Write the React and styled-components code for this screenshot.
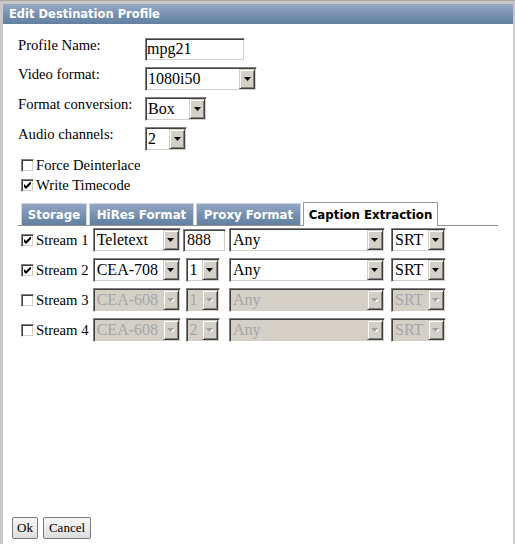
import React from "react";
import styled, { createGlobalStyle } from "styled-components";

const GlobalStyle = createGlobalStyle`
  html, body {
    margin: 0;
    padding: 0;
  }
  body {
    background: #c9c9c9;
    font-family: "Liberation Serif", "Times New Roman", serif;
  }
`;

const Frame = styled.div`
  width: 515px;
  height: 544px;
  box-sizing: border-box;
  padding: 3px 2px 0 3px;
  background: #c9c9c9;
  border-top: 1px solid #a9a9a9;
  display: flex;
`;

const Dialog = styled.div`
  flex: 1;
  background: #fff;
  display: flex;
  flex-direction: column;
`;

const TitleBar = styled.div`
  height: 20px;
  padding-left: 6px;
  display: flex;
  align-items: center;
  background: linear-gradient(#97a9c4, #7590b0 55%, #62809f);
  color: #fff;
  font: bold 11.5px "DejaVu Sans", Verdana, sans-serif;
`;

const Body = styled.div`
  flex: 1;
  padding: 14px 0 0 15px;
  display: flex;
  flex-direction: column;
`;

const FormGrid = styled.div`
  display: grid;
  grid-template-columns: 127px auto;
  row-gap: 6px;
  align-items: start;
  justify-items: start;
`;

const Label = styled.div`
  font-size: 14.67px;
  line-height: 17px;
  margin-top: -1px;
  color: #000;
`;

const Inset = styled.div`
  box-sizing: border-box;
  width: ${(p) => p.$w}px;
  height: ${(p) => p.$h || 24}px;
  padding: 1px;
  display: flex;
  align-items: stretch;
  border: 1px solid;
  border-color: #808080 #fff #fff #808080;
  box-shadow: inset 1px 1px #404040, inset -1px -1px #d4d0c8;
  background: ${(p) => (p.$disabled ? "#d4d0c8" : "#fff")};
  margin-left: ${(p) => p.$ml || 0}px;
`;

const Value = styled.span`
  flex: 1;
  padding-left: ${(p) => (p.$pad !== undefined ? p.$pad : 2)}px;
  font-size: 16px;
  line-height: ${(p) => (p.$lh ? p.$lh : 20)}px;
  white-space: nowrap;
  overflow: hidden;
  color: ${(p) => (p.$disabled ? "#a6a6a6" : "#000")};
`;

const DropButton = styled.span`
  width: 16px;
  box-sizing: border-box;
  background: #d4d0c8;
  border: 1px solid;
  border-color: #d4d0c8 #404040 #404040 #d4d0c8;
  box-shadow: inset 1px 1px #fff, inset -1px -1px #808080;
  display: flex;
  align-items: center;
  justify-content: center;
`;

const Select = ({ value, w, disabled, ml, pad }) => (
  <Inset $w={w} $disabled={disabled} $ml={ml}>
    <Value $disabled={disabled} $pad={pad}>
      {value}
    </Value>
    <DropButton>
      <svg width="7" height="4" viewBox="0 0 7 4">
        {disabled && <polygon points="1,1 8,1 4.5,5" fill="#fff" />}
        <polygon points="0,0 7,0 3.5,4" fill={disabled ? "#a0a0a0" : "#000"} />
      </svg>
    </DropButton>
  </Inset>
);

const TextInput = ({ value, w, pad }) => (
  <Inset $w={w} $h={23}>
    <Value $pad={pad} $lh={18}>
      {value}
    </Value>
  </Inset>
);

const CheckRow = styled.label`
  display: flex;
  align-items: center;
  gap: 2px;
  height: 20px;
  margin-left: 3px;
  font-size: 14.67px;
  color: #000;
`;

const Box = styled.span`
  box-sizing: border-box;
  width: 13px;
  height: 13px;
  flex: none;
  border: 1px solid;
  border-color: #808080 #fff #fff #808080;
  box-shadow: inset 1px 1px #404040, inset -1px -1px #d4d0c8;
  background: #fff;
  display: flex;
  align-items: center;
  justify-content: center;
`;

const Check = ({ checked }) => (
  <Box>
    {checked && (
      <svg width="7" height="7" viewBox="0 0 7 7">
        <polygon points="0,2 2,4 7,-1 7,2 2,7 0,5" fill="#000" />
      </svg>
    )}
  </Box>
);

const Checks = styled.div`
  margin-top: 4px;
  display: flex;
  flex-direction: column;
`;

const TabBar = styled.div`
  width: 477px;
  height: 23px;
  margin-top: 7px;
  box-sizing: content-box;
  padding-left: 3px;
  display: flex;
  align-items: flex-end;
  gap: 2px;
  border-bottom: 1px solid #919191;
`;

const Tab = styled.div`
  box-sizing: border-box;
  width: ${(p) => p.$w}px;
  height: ${(p) => (p.$active ? 24 : 22)}px;
  margin-bottom: ${(p) => (p.$active ? -1 : 0)}px;
  display: flex;
  align-items: center;
  justify-content: center;
  font: bold 11.8px "DejaVu Sans", Verdana, sans-serif;
  color: ${(p) => (p.$active ? "#000" : "#fff")};
  border: 1px solid ${(p) => (p.$active ? "#9a9a9a" : "#cfd3da")};
  border-bottom: none;
  background: ${(p) =>
    p.$active ? "#fff" : "linear-gradient(#93a6c2, #7590b0 55%, #62809f)"};
`;

const StreamGrid = styled.div`
  margin-top: 2px;
  display: grid;
  grid-template-columns: 74.7px 90.3px 46px 162px 55px;
  grid-auto-rows: 24px;
  row-gap: 6px;
  align-items: center;
  justify-items: start;
`;

const Footer = styled.div`
  display: flex;
  gap: 5px;
  padding: 0 0 5px 9px;
`;

const Button = styled.button`
  box-sizing: border-box;
  width: ${(p) => p.$w}px;
  height: 22px;
  padding: 0;
  font: 13px "Liberation Serif", "Times New Roman", serif;
  color: #000;
  border: 1px solid #7b7b7b;
  border-radius: 2px;
  background: linear-gradient(#f7f7f7, #ebebeb 50%, #dcdcdc);
`;

const streams = [
  { n: 1, on: true, type: "Teletext", param: "888", input: true },
  { n: 2, on: true, type: "CEA-708", param: "1" },
  { n: 3, on: false, type: "CEA-608", param: "1" },
  { n: 4, on: false, type: "CEA-608", param: "2" },
];

const tabs = [
  { name: "Storage", w: 66 },
  { name: "HiRes Format", w: 105 },
  { name: "Proxy Format", w: 105 },
  { name: "Caption Extraction", w: 135, active: true },
];

export default function App() {
  return (
    <>
      <GlobalStyle />
      <Frame>
        <Dialog>
          <TitleBar>Edit Destination Profile</TitleBar>
          <Body>
            <FormGrid>
              <Label>Profile Name:</Label>
              <TextInput value="mpg21" w={100} pad={0} />
              <Label>Video format:</Label>
              <Select value="1080i50" w={112} pad={1} />
              <Label>Format conversion:</Label>
              <Select value="Box" w={62} pad={1} />
              <Label>Audio channels:</Label>
              <Select value="2" w={42} pad={1} />
            </FormGrid>
            <Checks>
              <CheckRow>
                <Check />
                Force Deinterlace
              </CheckRow>
              <CheckRow>
                <Check checked />
                Write Timecode
              </CheckRow>
            </Checks>
            <TabBar>
              {tabs.map((t) => (
                <Tab key={t.name} $w={t.w} $active={t.active}>
                  {t.name}
                </Tab>
              ))}
            </TabBar>
            <StreamGrid>
              {streams.map((s) => (
                <React.Fragment key={s.n}>
                  <CheckRow>
                    <Check checked={s.on} />
                    Stream {s.n}
                  </CheckRow>
                  <Select value={s.type} w={88} disabled={!s.on} />
                  {s.input ? (
                    <TextInput value={s.param} w={43} pad={2} />
                  ) : (
                    <Select value={s.param} w={34} disabled={!s.on} ml={2.6} />
                  )}
                  <Select value="Any" w={156} disabled={!s.on} />
                  <Select value="SRT" w={55} disabled={!s.on} />
                </React.Fragment>
              ))}
            </StreamGrid>
          </Body>
          <Footer>
            <Button $w={26}>Ok</Button>
            <Button $w={48}>Cancel</Button>
          </Footer>
        </Dialog>
      </Frame>
    </>
  );
}
